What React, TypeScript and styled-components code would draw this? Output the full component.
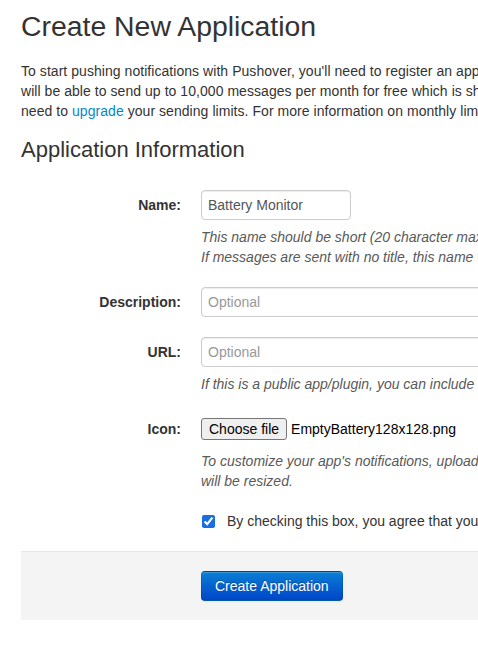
import styled, { createGlobalStyle } from "styled-components";

const GlobalStyle = createGlobalStyle`
  html {
    overflow: hidden;
  }
  body {
    margin: 0;
    background: #fff;
    color: #333;
    font-family: "Liberation Sans", Arial, Helvetica, sans-serif;
    font-size: 14px;
    line-height: 20px;
  }
`

const Page = styled.div`
  width: 940px;
  padding: 0 0 20px 21px;
`

const Title = styled.h1`
  margin: 6px 0 0;
  font-size: 28.4px;
  font-weight: normal;
  line-height: 40px;
  color: #333;
`

const Intro = styled.p`
  margin: 15px 0 0;
  white-space: nowrap;
  line-height: 20px;
  letter-spacing: 0.05px;

  a {
    color: #0088cc;
    text-decoration: none;
  }
`

const SectionTitle = styled.h2`
  margin: 14px 0 0;
  font-size: 22px;
  font-weight: normal;
  line-height: 30px;
  color: #333;
`

const Form = styled.form`
  margin-top: 25px;
`

const Group = styled.div`
  display: flex;
  margin-bottom: 20px;
`

const Label = styled.label`
  width: 160px;
  flex-shrink: 0;
  padding-top: 5px;
  text-align: right;
  font-weight: bold;
  line-height: 20px;
`

const Controls = styled.div<{ $offset?: number }>`
  margin-left: ${p => p.$offset ?? 20}px;
  flex: 1;
`

const ControlRow = styled.div`
  display: flex;
  align-items: center;
  min-height: 30px;
`

const TextInput = styled.input<{ $width: number }>`
  box-sizing: border-box;
  width: ${p => p.$width}px;
  height: 30px;
  padding: 4px 6px;
  border: 1px solid #ccc;
  border-radius: 4px;
  box-shadow: inset 0 1px 1px rgba(0, 0, 0, 0.075);
  font-family: inherit;
  font-size: 14px;
  line-height: 20px;
  color: #555;
  outline: none;

  &::placeholder {
    color: #999;
  }
`

const Help = styled.div`
  margin-top: 7px;
  font-style: italic;
  color: #595959;
  white-space: nowrap;
  line-height: 20px;
`

const FileButton = styled.button`
  height: 22px;
  padding: 0 7px;
  border: 1px solid #767676;
  border-radius: 3px;
  background: #efefef;
  font-family: inherit;
  font-size: 14px;
  color: #000;
  line-height: 20px;
`

const FileName = styled.span`
  margin-left: 4px;
  color: #000;
`

const CheckRow = styled.label`
  display: flex;
  align-items: center;
  height: 20px;
  white-space: nowrap;

  input {
    width: 13px;
    height: 13px;
    margin: 0 12px 0 1px;
    accent-color: #1a6fe0;
  }
`

const Actions = styled.div`
  padding: 19px 20px 19px 180px;
  background: #f4f4f4;
  border-top: 1px solid #e5e5e5;
`

const PrimaryButton = styled.button`
  height: 30px;
  padding: 4px 13px;
  border: 1px solid #0044cc;
  border-color: rgba(0, 0, 0, 0.1) rgba(0, 0, 0, 0.1) rgba(0, 0, 0, 0.25);
  border-radius: 4px;
  background: linear-gradient(to bottom, #0a7fd4, #0045c9);
  color: #fff;
  font-family: inherit;
  font-size: 14px;
  line-height: 20px;
  text-shadow: 0 -1px 0 rgba(0, 0, 0, 0.25);
  box-shadow: inset 0 1px 0 rgba(255, 255, 255, 0.2), 0 1px 2px rgba(0, 0, 0, 0.05);
  cursor: pointer;
`

export default function App() {
  return <>
    <GlobalStyle/>
    <Page>
      <Title>Create New Application</Title>
      <Intro>
        To start pushing notifications with Pushover, you'll need to register an application and get its API token. Each application<br/>
        will be able to send up to 10,000 messages per month for free which is shared among all of your applications. If you<br/>
        need to <a href="#">upgrade</a> your sending limits. For more information on monthly limits, see the API documentation.
      </Intro>
      <SectionTitle>Application Information</SectionTitle>
      <Form onSubmit={e => e.preventDefault()}>
        <Group>
          <Label>Name:</Label>
          <Controls>
            <TextInput $width={150} defaultValue="Battery Monitor"/>
            <Help>
              This name should be short (20 character max) and will be shown to users when they receive messages.<br/>
              If messages are sent with no title, this name will be used as the title.
            </Help>
          </Controls>
        </Group>
        <Group>
          <Label>Description:</Label>
          <Controls>
            <TextInput $width={530} placeholder="Optional"/>
          </Controls>
        </Group>
        <Group>
          <Label>URL:</Label>
          <Controls>
            <TextInput $width={530} placeholder="Optional"/>
            <Help>If this is a public app/plugin, you can include a URL to it here for users to learn more.</Help>
          </Controls>
        </Group>
        <Group>
          <Label>Icon:</Label>
          <Controls>
            <ControlRow>
              <FileButton type="button">Choose file</FileButton>
              <FileName>EmptyBattery128x128.png</FileName>
            </ControlRow>
            <Help>
              To customize your app's notifications, upload a 72x72 PNG icon to be shown alongside each message. Larger icons<br/>
              will be resized.
            </Help>
          </Controls>
        </Group>
        <Group>
          <Controls $offset={180}>
            <CheckRow>
              <input type="checkbox" defaultChecked/>
              By checking this box, you agree that you have read and accept our Terms of Service.
            </CheckRow>
          </Controls>
        </Group>
        <Actions>
          <PrimaryButton type="submit">Create Application</PrimaryButton>
        </Actions>
      </Form>
    </Page>
  </>
}
